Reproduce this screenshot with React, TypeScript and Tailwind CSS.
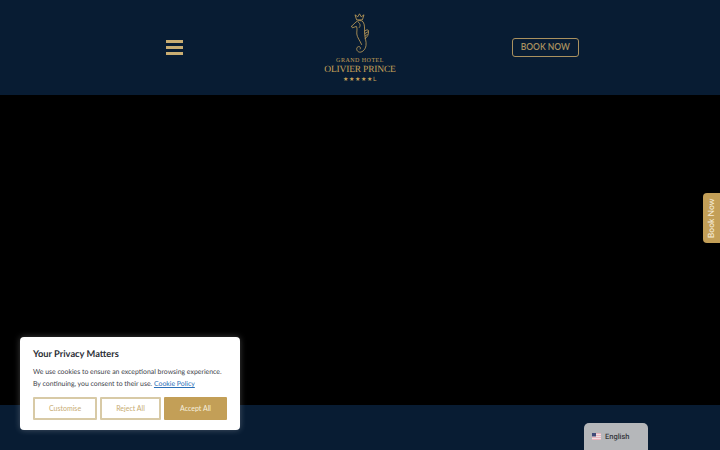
import React from 'react';

const Seahorse = () => (
  <svg width="18" height="41" viewBox="0 0 18 41" fill="none" stroke="#c7a25a" strokeWidth="0.8" strokeLinecap="round" strokeLinejoin="round">
    {/* crown */}
    <path d="M5.5 6.5 L4 1.8 L6.8 3.8 L8.5 0.8 L10.2 3.8 L13 1.8 L11.5 6.5 Z" />
    {/* head and back, down to the tail curl */}
    <path d="M0.6 13.2 L5 9 C7 7.2 10.5 7 12 8.8 C14 11.5 13.5 16 13.6 20 C13.8 25 15.6 28.5 15 32.5 C14.4 37 10.5 40.3 7.5 38.8 C5 37.5 5.2 34 7.6 33.6 C9.2 33.4 10 35 9.2 36" />
    {/* snout and belly */}
    <path d="M0.6 13.2 L1.4 14.8 L5.4 13.4 C6.6 15.5 5.6 18.5 5.8 21 C6.1 24.5 9 27.5 10.6 31.5" />
    <path d="M7.5 9.4 C9.6 10.6 9.6 13.4 8.2 14.6" />
    {/* fin */}
    <path d="M13.8 18 C15.2 16.4 17.4 16.4 17.6 18 C17.9 21 16.4 24.6 14 25.6" />
    <path d="M14 20.5 L16.8 18.8 M14.2 23 L16.4 21.4" />
  </svg>
);

const Header = () => (
  <header className="bg-[#081c33] h-[95px] px-[82px] grid grid-cols-3 items-center shrink-0">
    <div className="flex justify-center">
      <div className="w-[17px] flex flex-col gap-[3px]">
        <span className="h-[3px] bg-[#c9ad72]" />
        <span className="h-[3px] bg-[#c9ad72]" />
        <span className="h-[3px] bg-[#c9ad72]" />
      </div>
    </div>
    <div className="flex flex-col items-center text-[#c7a25a] font-['Liberation_Serif',serif]">
      <Seahorse />
      <span className="text-[6px] leading-[8px] tracking-[0.08em] mt-[3px]">GRAND HOTEL</span>
      <span className="text-[9.5px] leading-[10px] tracking-[-0.02em] whitespace-nowrap">OLIVIER PRINCE</span>
      <span className="text-[6px] leading-[7px] tracking-[0.1em] mt-[1px] font-['DejaVu_Sans',sans-serif]">★★★★★L</span>
    </div>
    <div className="flex justify-center">
      <button className="w-[67px] h-[19px] -mt-[1px] border-[1.5px] border-[#aa915f] rounded-[3px] text-[#aa915f] text-[8.5px] font-['Lato',sans-serif] font-semibold flex items-center justify-center whitespace-nowrap">
        BOOK NOW
      </button>
    </div>
  </header>
);

const CookieBanner = () => (
  <div className="absolute left-[20px] top-[337px] w-[220px] h-[93px] bg-white rounded-[4px] px-[13px] pt-[10px] font-['Lato',sans-serif] shadow-[0_0_6px_rgba(255,255,255,0.25)]">
    <h2 className="text-[9.3px] leading-[13px] font-bold text-[#2b2f36]">Your Privacy Matters</h2>
    <p className="mt-[6px] text-[6.9px] leading-[12px] text-[#3d4149] whitespace-nowrap">
      We use cookies to ensure an exceptional browsing experience.
      <br />
      By continuing, you consent to their use.{' '}
      <a className="text-[#2a6fb8] underline">Cookie Policy</a>
    </p>
    <div className="mt-[7px] flex gap-[3px]">
      <button className="w-[64px] h-[23px] border-2 border-[#d8caa6] rounded-[1px] text-[7px] text-[#c7ac73]">Customise</button>
      <button className="w-[61px] h-[23px] border-2 border-[#d8caa6] rounded-[1px] text-[7px] text-[#c7ac73]">Reject All</button>
      <button className="w-[63px] h-[23px] bg-[#c39f57] rounded-[1px] text-[7px] text-[#f6efdf]">Accept All</button>
    </div>
  </div>
);

const LanguagePicker = () => (
  <div className="absolute left-[584px] top-[423px] w-[64px] h-[27px] bg-[#b5b7ba] rounded-t-[5px] flex items-start gap-[4px] pl-[8px] pt-[9px]">
    <svg width="9" height="7" viewBox="0 0 9 7" className="mt-[1px]">
      <rect width="9" height="7" fill="#e8b4bd" />
      <rect y="1" width="9" height="1" fill="#f0dfe2" />
      <rect y="3" width="9" height="1" fill="#f0dfe2" />
      <rect y="5" width="9" height="1" fill="#f0dfe2" />
      <rect width="4" height="3.5" fill="#3f4a78" />
    </svg>
    <span className="text-[7.5px] leading-[9px] font-['Roboto',sans-serif] font-medium text-[#35383d]">English</span>
  </div>
);

const SideTab = () => (
  <div className="absolute right-0 top-[193px] w-[17px] h-[50px] bg-[#c39f57] rounded-l-[4px] flex items-center justify-center">
    <span className="-rotate-90 whitespace-nowrap text-[8.5px] font-['Lato',sans-serif] font-medium text-[#f5ecd8]">Book Now</span>
  </div>
);

export default function App() {
  return (
    <div className="relative w-[720px] h-[450px] overflow-hidden flex flex-col bg-[#081c33] [text-rendering:geometricPrecision]">
      <Header />
      <div className="bg-black h-[310px] shrink-0" />
      <div className="flex-1 bg-[#081c33]" />
      <SideTab />
      <CookieBanner />
      <LanguagePicker />
    </div>
  );
}
